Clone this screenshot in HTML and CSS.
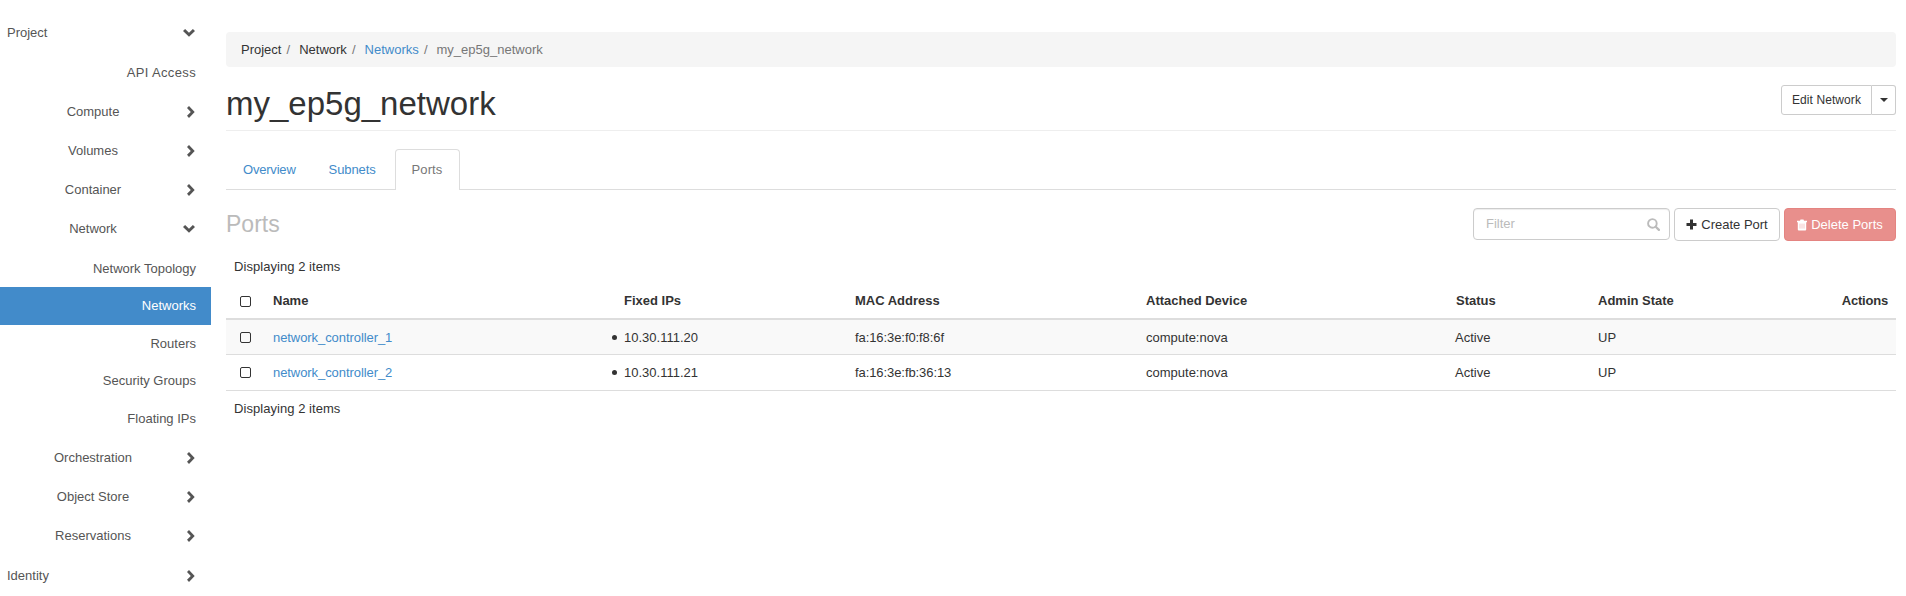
FILE: index.html
```html
<!DOCTYPE html>
<html lang="en">
<head>
<meta charset="utf-8">
<title>my_ep5g_network</title>
<link rel="stylesheet" href="styles.css">
</head>
<body>
<svg width="0" height="0" class="defs">
  <symbol id="right" viewBox="0 0 8 12"><path d="M0 2.1 2 0l5.7 5.9L2 11.9 0 9.8l3.8-3.9z"/></symbol>
  <symbol id="down" viewBox="0 0 12 8"><path d="M2.1 0 0 2l6 5.7L12 2 9.9 0 6 3.8z"/></symbol>
</svg>
<div class="page">
  <nav class="sidebar">
    <a class="item top"><span>Project</span><svg class="down"><use href="#down"/></svg></a>
    <a class="item leaf tall">API Access</a>
    <a class="item group"><span>Compute</span><svg class="right"><use href="#right"/></svg></a>
    <a class="item group"><span>Volumes</span><svg class="right"><use href="#right"/></svg></a>
    <a class="item group"><span>Container</span><svg class="right"><use href="#right"/></svg></a>
    <a class="item group"><span>Network</span><svg class="down"><use href="#down"/></svg></a>
    <a class="item leaf first">Network Topology</a>
    <a class="item leaf active">Networks</a>
    <a class="item leaf">Routers</a>
    <a class="item leaf">Security Groups</a>
    <a class="item leaf">Floating IPs</a>
    <a class="item group after"><span>Orchestration</span><svg class="right"><use href="#right"/></svg></a>
    <a class="item group"><span>Object Store</span><svg class="right"><use href="#right"/></svg></a>
    <a class="item group"><span>Reservations</span><svg class="right"><use href="#right"/></svg></a>
    <a class="item top"><span>Identity</span><svg class="right"><use href="#right"/></svg></a>
  </nav>
  <main class="content">
    <ol class="breadcrumb">
      <li>Project</li><li>Network</li><li><a>Networks</a></li><li class="current">my_ep5g_network</li>
    </ol>
    <header class="page-header">
      <h1>my_ep5g_network</h1>
      <div class="split"><button class="edit">Edit Network</button><button class="toggle"><i class="caret"></i></button></div>
    </header>
    <ul class="tabs"><li>Overview</li><li class="subnets">Subnets</li><li class="active">Ports</li></ul>
    <div class="toolbar">
      <h3>Ports</h3>
      <div class="actions">
        <div class="filter"><span>Filter</span><svg width="13" height="13" viewBox="0 0 13 13"><circle cx="5.4" cy="5.4" r="4.3" fill="none" stroke="#bbb" stroke-width="1.9"/><path d="m8.7 8.7 3.2 3.2" stroke="#bbb" stroke-width="2.2" stroke-linecap="round"/></svg></div>
        <button class="btn create"><svg width="11" height="11" viewBox="0 0 11 11"><path d="M4 .5h3V4h3.5v3H7v3.5H4V7H.5V4H4z" fill="#333"/></svg><span>Create Port</span></button>
        <button class="btn delete"><svg width="10" height="12" viewBox="0 0 10 12"><path fill="#fff" d="M3 1.7 3.5.4h3L7 1.7h3v1.5H9.2v7.3q0 1.1-1 1.1H1.8q-1 0-1-1.1V3.2H0V1.7z"/><path d="M3 4.6v5M5 4.6v5M7 4.6v5" stroke="#e88f8c" stroke-width=".5"/></svg><span>Delete Ports</span></button>
      </div>
    </div>
    <div class="count">Displaying 2 items</div>
    <table>
      <colgroup><col class="c-check"><col class="c-name"><col class="c-ip"><col class="c-mac"><col class="c-device"><col class="c-status"><col></colgroup>
      <thead><tr><th><i class="check"></i></th><th>Name</th><th>Fixed IPs</th><th>MAC Address</th><th>Attached Device</th><th>Status</th><th><div class="last"><span>Admin State</span><span class="end">Actions</span></div></th></tr></thead>
      <tbody>
        <tr><td><i class="check"></i></td><td><a>network_controller_1</a></td><td><ul><li>10.30.111.20</li></ul></td><td class="mac">fa:16:3e:f0:f8:6f</td><td>compute:nova</td><td class="status">Active</td><td>UP</td></tr>
        <tr><td><i class="check"></i></td><td><a>network_controller_2</a></td><td><ul><li>10.30.111.21</li></ul></td><td class="mac">fa:16:3e:fb:36:13</td><td>compute:nova</td><td class="status">Active</td><td>UP</td></tr>
      </tbody>
    </table>
    <div class="count foot">Displaying 2 items</div>
  </main>
</div>
</body>
</html>
```
FILE: styles.css
```css
* { box-sizing: border-box; }
body { margin: 0; background: #fff; color: #333; font: 13px/18px "Liberation Sans", Arial, sans-serif; }
ul, ol { margin: 0; padding: 0; list-style: none; }
button { font: inherit; color: #333; margin: 0; padding: 0; background: #fff; }
a { color: #428bca; }
.defs { display: block; height: 0; }
.page { display: flex; height: 596px; overflow: hidden; }

.sidebar { width: 211px; padding-top: 13.9px; margin-right: 15px; flex: none; }
.item { display: flex; align-items: center; height: 39.2px; color: #555; padding-right: 16px; }
.item svg { fill: #555; flex: none; }
.right { width: 8px; height: 12px; }
.down { width: 12px; height: 8px; }
.top { justify-content: space-between; padding-left: 7px; }
.group span { width: 186px; text-align: center; margin-right: auto; }
.group .down { margin-left: -3px; }
.group.after { margin-top: 1px; }
.leaf { justify-content: flex-end; height: 37.5px; padding-right: 15px; }
.leaf.tall { height: 39.2px; letter-spacing: .35px; }
.leaf.first { height: 37.9px; padding-top: 1.2px; }
.leaf.active { background: #428bca; color: #fff; height: 38px; }

.content { width: 1670px; padding-top: 32px; }
.breadcrumb { display: flex; height: 35px; padding: 9px 15px 8px; background: #f5f5f5; border-radius: 4px; }
.breadcrumb li + li::before { content: "/"; color: #777; padding: 0 9px 0 5.1px; }
.breadcrumb .current { color: #777; }
.page-header { display: flex; justify-content: space-between; height: 64px; border-bottom: 1px solid #eee; padding-top: 18px; }
h1 { margin: 1px 0 0; font-size: 33px; line-height: 36px; font-weight: 400; }
.split { display: flex; height: 30px; font-size: 12px; }
.split button { border: 1px solid #ccc; }
.split .edit { width: 91px; border-radius: 3px 0 0 3px; letter-spacing: .08px; }
.split .toggle { width: 24px; border-left: 0; border-radius: 0 3px 3px 0; display: flex; align-items: center; justify-content: center; }
.caret { border: 4px solid transparent; border-top-color: #333; border-bottom: 0; }

.tabs { display: flex; height: 41px; margin-top: 18px; border-bottom: 1px solid #ddd; }
.tabs li { height: 41px; padding: 12px 16px; margin-right: 2px; color: #428bca; letter-spacing: -.2px; }
.tabs li:first-child { padding-left: 17px; }
.tabs .subnets { letter-spacing: -.1px; padding: 12px 17px 12px 15px; }
.tabs .active { width: 65px; padding: 11px 16px; letter-spacing: .1px; color: #777; background: #fff; border: 1px solid #ddd; border-bottom: 0; border-radius: 4px 4px 0 0; }

.toolbar { display: flex; justify-content: space-between; margin-top: 18px; height: 33px; }
h3 { margin: 3px 0 0; font-size: 23px; line-height: 26px; font-weight: 400; color: #bbb; }
.actions { display: flex; gap: 4px; }
.filter { display: flex; align-items: center; justify-content: space-between; width: 197px; height: 32px; padding: 0 9px 0 12px; border: 1px solid #ccc; border-radius: 4px; color: #bbb; box-shadow: inset 0 1px 1px rgba(0,0,0,.075); }
.btn { display: flex; align-items: center; justify-content: center; gap: 4px; height: 33px; border: 1px solid #ccc; border-radius: 4px; }
.create { width: 106px; }
.delete { width: 112px; background: #e88f8c; border-color: #e48481; color: #fff; }

.count { padding: 17px 8px 0; height: 42px; letter-spacing: .05px; }
table { width: 1670px; table-layout: fixed; border-collapse: separate; border-spacing: 0; }
th, td { padding: 0 8px; text-align: left; vertical-align: middle; }
th { height: 37px; border-bottom: 2px solid #ddd; font-weight: 700; padding-top: 1px; }
td { height: 35px; border-bottom: 1px solid #ddd; }
tbody tr:last-child td { height: 36px; }
tbody tr:first-child td { background: #f9f9f9; padding-top: 1px; }
td a { letter-spacing: -.07px; }
td.mac { letter-spacing: -.08px; }
td.status { padding-left: 7px; }
.last { display: flex; justify-content: space-between; }
.end { letter-spacing: -.2px; }
.c-check { width: 39px; }
.c-name { width: 351px; }
.c-ip { width: 231px; }
.c-mac { width: 291px; }
.c-device { width: 310px; }
.c-status { width: 142px; }
td li { display: flex; align-items: center; margin-left: -12px; }
td li::before { content: ""; width: 5px; height: 5px; margin-right: 7px; border-radius: 50%; background: #333; }
.check { display: block; width: 11px; height: 11px; margin-left: 6px; border: 1px solid #333; border-radius: 2px; }
.foot { padding-top: 9px; }
```
